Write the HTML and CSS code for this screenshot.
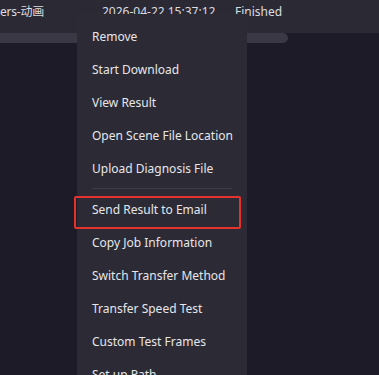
FILE: index.html
```html
<!DOCTYPE html>
<html lang="en">
<head>
  <meta charset="UTF-8" />
  <title>Jobs</title>
  <link rel="stylesheet" href="styles.css">
</head>
<body>
  <div class="job-row">
    <span class="cell cell-name">ers-动画</span>
    <span class="cell cell-time">2026-04-22 15:37:12</span>
    <span class="cell cell-status">Finished</span>
  </div>
  <div class="hscroll"><div class="hscroll-thumb"></div></div>

  <ul class="context-menu">
    <li class="menu-item">Remove</li>
    <li class="menu-item">Start Download</li>
    <li class="menu-item">View Result</li>
    <li class="menu-item">Open Scene File Location</li>
    <li class="menu-item">Upload Diagnosis File</li>
    <li class="menu-sep"></li>
    <li class="menu-item marked">Send Result to Email</li>
    <li class="menu-item">Copy Job Information</li>
    <li class="menu-item">Switch Transfer Method</li>
    <li class="menu-item">Transfer Speed Test</li>
    <li class="menu-item">Custom Test Frames</li>
    <li class="menu-item">Set up Path</li>
  </ul>
</body>
</html>
```

FILE: styles.css
```css
body {
  margin: 0;
  background-color: #1c1b27;
  font-family: "Noto Sans", "Noto Sans CJK SC", sans-serif;
  font-size: 12px;
  color: #dcdce0;
  overflow: hidden;
  height: 375px;
  position: relative;
}
.job-row {
  height: 33px;
  box-sizing: border-box;
  padding-top: 2px;
  background-color: #2b2a34;
  display: flex;
  align-items: flex-start;
  line-height: 20px;
  white-space: nowrap;
}
.cell-name {
  width: 102px;
  letter-spacing: -0.2px;
}
.cell-time {
  width: 133px;
}
.hscroll {
  height: 10px;
}
.hscroll-thumb {
  width: 288px;
  height: 10px;
  background-color: #393844;
  border-radius: 0 5px 5px 0;
}
.context-menu {
  position: absolute;
  top: 14px;
  left: 77px;
  width: 170px;
  margin: 0;
  padding: 6px 0 0;
  list-style: none;
  background-color: #2c2b35;
  color: #e6e6ea;
  font-size: 12px;
}
.menu-item {
  height: 33px;
  line-height: 33px;
  padding-left: 15px;
  white-space: nowrap;
  position: relative;
}
.menu-sep {
  height: 1px;
  margin: 3px 15px 4px;
  background-color: #3e3d48;
}
.menu-item.marked::after {
  content: "";
  position: absolute;
  top: 3px;
  left: -3px;
  width: 167px;
  height: 33px;
  box-sizing: border-box;
  border: 2px solid #e5322d;
  border-radius: 2px;
}
```
